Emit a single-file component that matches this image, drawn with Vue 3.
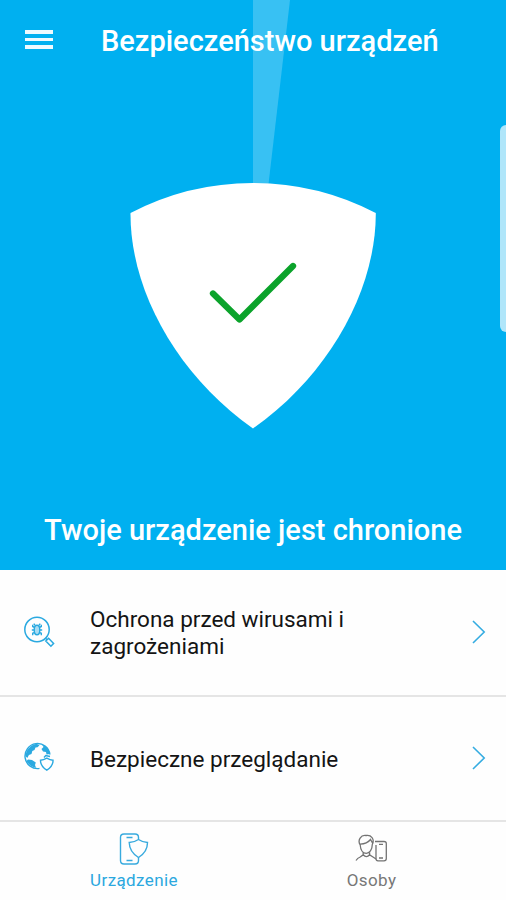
<script setup>
const features = [
  { id: 'virus', label: 'Ochrona przed wirusami i zagrożeniami' },
  { id: 'web', label: 'Bezpieczne przeglądanie' }
]
</script>

<template>
  <div class="screen">
    <section class="hero">
      <svg class="beam" width="506" height="190" viewBox="0 0 506 190" aria-hidden="true">
        <path d="M253 0H290L268.500 184H253Z" fill="#fff" fill-opacity=".22" />
      </svg>
      <header class="bar">
        <button class="menu" aria-label="Menu"><i></i><i></i><i></i></button>
        <h1 class="title">Bezpieczeństwo urządzeń</h1>
      </header>
      <svg class="shield" width="246" height="246" viewBox="130 183 246 246" aria-hidden="true">
        <path d="M130.500 213Q188 183 253 183T375.800 213C376 290 329 375 253 428.500C177 375 130 290 130.500 213Z" fill="#fff" />
        <path d="M213 293.500L239.500 319.500L293 266" fill="none" stroke="#0ba32b" stroke-width="6.300" stroke-linecap="round" stroke-linejoin="round" />
      </svg>
      <p class="status">Twoje urządzenie jest chronione</p>
      <span class="edge"></span>
    </section>

    <main class="list">
      <div v-for="f in features" :key="f.id" class="row">
        <svg v-if="f.id === 'virus'" class="icon" width="32" height="32" viewBox="0 0 32 32" fill="none" stroke="#2aa9e0" stroke-width="1.500">
          <circle cx="13" cy="13.500" r="12.200" />
          <path d="M21.300 22L23 23.700M21.800 25L24.600 22.200L29.600 27.400L26.900 30.200Z" />
          <ellipse cx="13" cy="14" rx="2.800" ry="4.800" fill="#2aa9e0" fill-opacity=".4" stroke-width="1.400" />
          <path stroke-width="1.400" d="M11 9.300L9.800 7.700M15 9.300L16.200 7.700M10.800 11.500L8.700 10.500V8.700M15.200 11.500L17.300 10.500V8.700M10.500 14H7.800M15.500 14H18.200M10.800 16.300L8.700 17.300V19.300M15.200 16.300L17.300 17.300V19.300" />
        </svg>
        <svg v-else class="icon" width="32" height="32" viewBox="0 0 32 32" fill="none" stroke="#2aa9e0" stroke-width="1.400">
          <path d="M15.500 26.400A12.500 12.500 0 1 1 25.900 12.500" />
          <path d="M2.500 9.500Q5.500 3.300 12.500 1.700L15.500 3.300L13.500 5.200L11.500 5.500L10.500 8L8.300 9L7.500 12L4.900 13L3.300 16L1.300 14ZM18 2.300Q24.500 4.500 25.800 12L22.500 12.500L22 10L19 9.500L17.500 7L19.500 5ZM4 17.500L8 18L11.800 20.500L11 23L12 25.800Q5.500 24.500 2.500 19Z" fill="#2aa9e0" stroke="none" />
          <path d="M16.500 18.200Q19.500 18.200 22.800 16.200Q26 18.200 29 18.200Q29.300 24 22.800 28.200Q16.300 24 16.500 18.200Z" fill="#fff" />
          <path d="M20 15.500L21.800 13.500L26 14.500" />
        </svg>
        <span class="label">{{ f.label }}</span>
        <svg class="chevron" width="14" height="26" viewBox="0 0 14 26" fill="none" stroke="#35ace1" stroke-width="1.600">
          <path d="M1 2L12.200 13L1 24" />
        </svg>
      </div>
    </main>

    <nav class="tabs">
      <a class="tab active">
        <svg width="32" height="34" viewBox="0 0 32 34" fill="none" stroke="#38aade" stroke-width="1.400">
          <path d="M20.500 7V5.500Q20.500 2 17 2H6Q2.500 2 2.500 5.500V28.500Q2.500 32 6 32H17Q20.500 32 20.500 28.500V25M8.500 5.500H14.500M8.500 28.500H14.500" />
          <path d="M11.200 10.500Q16 10.500 20.500 7.500Q25 10.500 29.500 10.500Q29.500 20 20.500 25.500Q11.500 20 11.200 10.500Z" />
        </svg>
        <span>Urządzenie</span>
      </a>
      <a class="tab">
        <svg width="34" height="34" viewBox="0 0 34 34" fill="none" stroke="#737373" stroke-width="1.300">
          <path d="M5.200 13C2.200 8 6 2.700 11 3.500C16 2.500 20 7 17.300 12.500C17.200 18 14.500 21.300 11.300 21.300C8 21.300 5.500 18 5.200 13ZM5.200 12.200Q12 12 15.500 7.500L17.500 11" />
          <path d="M8.200 20.300V22.800L5.200 25Q2.500 26 1 28.500M14.600 20.300V22.800L18 25L21 27M8.200 22.800Q11.400 26.500 14.600 22.800" />
          <path d="M20 9.500H29Q31.300 9.500 31.300 11.500V26.500Q31.300 28.800 29 28.800H23Q21 28.800 21 26.500V13M24 12.300H28M24 26H28" />
        </svg>
        <span>Osoby</span>
      </a>
    </nav>
  </div>
</template>

<style>
body { margin: 0; background: #fff; }
</style>

<style scoped>
* { box-sizing: border-box; }
.screen {
  width: 506px;
  height: 900px;
  display: flex;
  flex-direction: column;
  background: #fefefe;
  font-family: Roboto, "Liberation Sans", sans-serif;
  overflow: hidden;
}
.hero {
  position: relative;
  height: 570px;
  flex: none;
  display: flex;
  flex-direction: column;
  align-items: center;
  background: #00b0f0;
  color: #fff;
}
.beam { position: absolute; top: 0; left: 0; }
.bar {
  position: relative;
  width: 100%;
  height: 82px;
  flex: none;
  display: flex;
  align-items: center;
  padding-left: 25px;
}
.menu {
  width: 28px;
  padding: 0;
  margin: 0 48px 3px 0;
  border: 0;
  background: none;
  display: flex;
  flex-direction: column;
  gap: 4px;
}
.menu i { height: 3.500px; background: #eefaff; }
.title {
  margin: 0 0 1px;
  font-size: 29px;
  line-height: 34px;
  font-weight: 500;
  white-space: nowrap;
}
.shield { position: relative; display: block; margin-top: 101px; flex: none; }
.status {
  margin: 84px 0 0;
  font-size: 29px;
  line-height: 34px;
  font-weight: 500;
  white-space: nowrap;
}
.edge {
  position: absolute;
  right: 0;
  top: 125px;
  width: 6px;
  height: 207px;
  border-radius: 6px 0 0 6px;
  background: #b0e6fa;
}
.list { flex: none; }
.row {
  height: 126.500px;
  display: flex;
  align-items: center;
  padding: 0 20px 0 24px;
  border-bottom: 2px solid #e5e5e5;
}
.row + .row { height: 125px; }
.icon { flex: none; margin-right: 34px; }
.label {
  width: 290px;
  padding-top: 2px;
  color: #141414;
  font-size: 22.500px;
  line-height: 27px;
}
.chevron { margin-left: auto; flex: none; }
.tabs { flex: 1; display: grid; grid-template-columns: 268px 1fr; }
.tab {
  display: flex;
  flex-direction: column;
  align-items: center;
  padding-top: 10.500px;
  color: #777;
  font-size: 17px;
  line-height: 20px;
  letter-spacing: 0.400px;
}
.tab span { margin-top: 4px; }
.tab:last-child { padding-right: 31px; }
.active { color: #2ba8df; }
</style>
